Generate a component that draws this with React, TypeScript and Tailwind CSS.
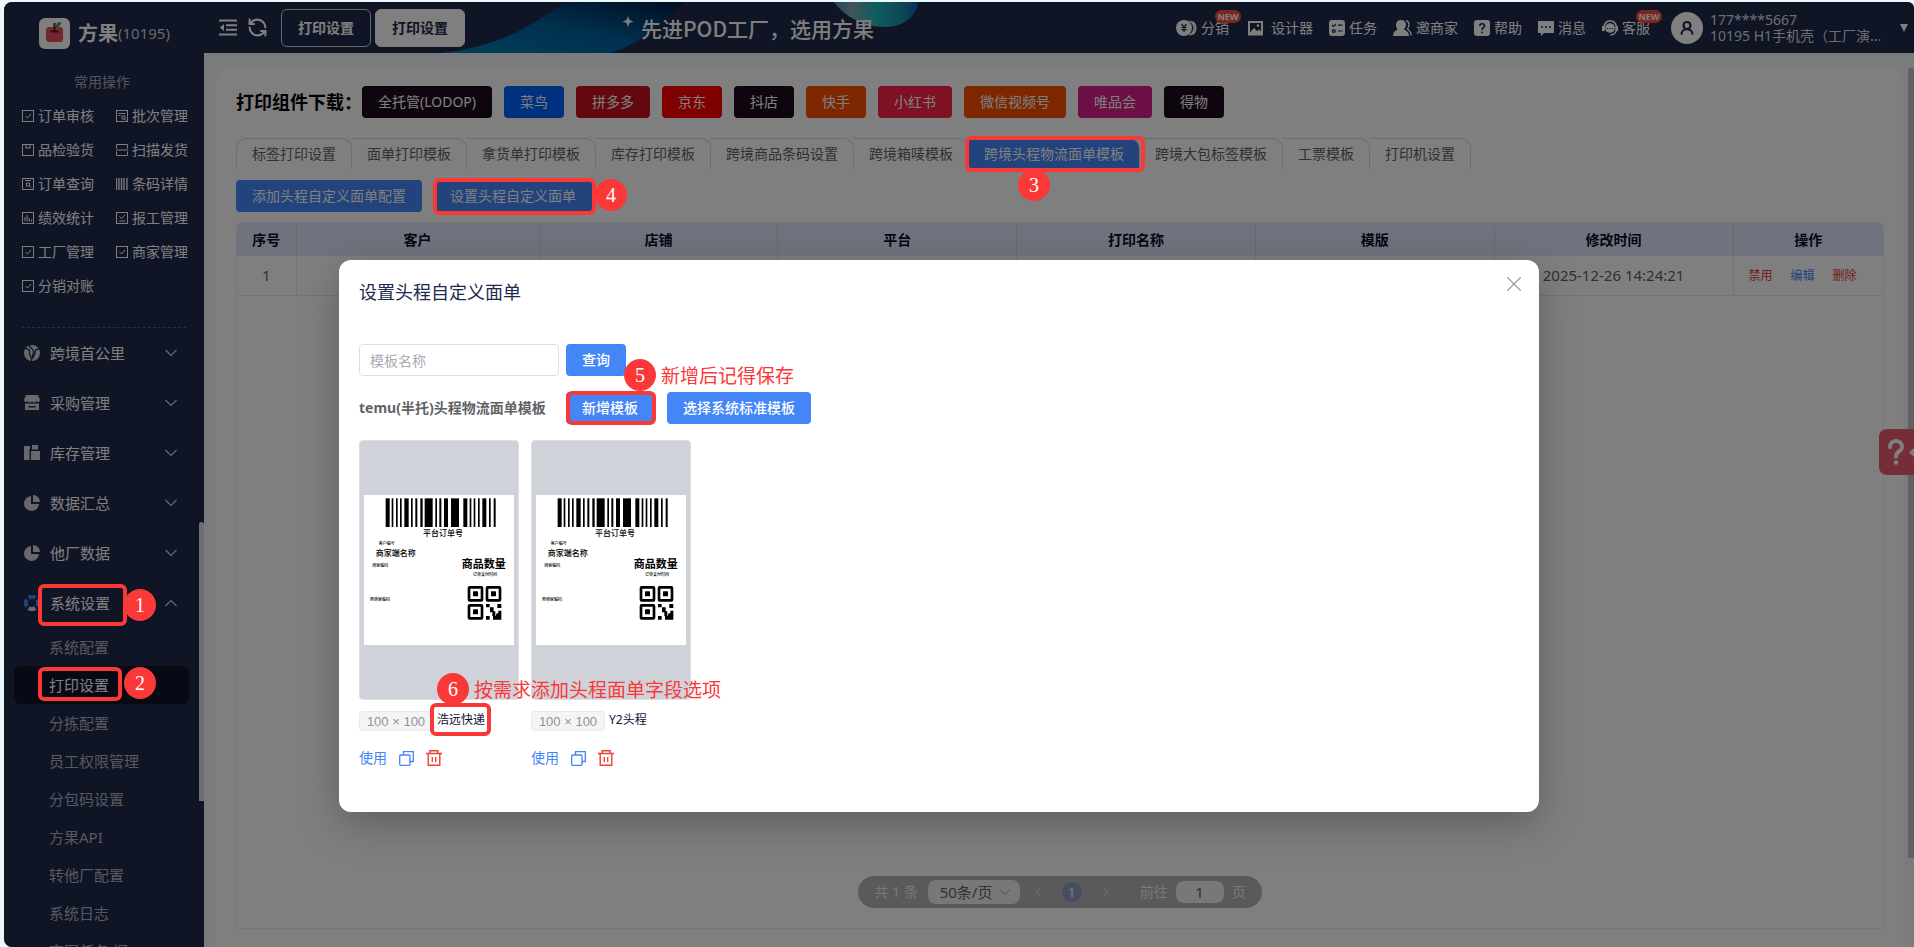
import type { ReactNode } from "react";
import clsx from "clsx";
import { RefreshCcw } from "lucide-react";

const quickLinks = [
    { name: "订单审核", icon: "check" },
    { name: "批次管理", icon: "batch" },
    { name: "品检验货", icon: "package" },
    { name: "扫描发货", icon: "scan" },
    { name: "订单查询", icon: "search" },
    { name: "条码详情", icon: "barcode" },
    { name: "绩效统计", icon: "chart" },
    { name: "报工管理", icon: "report" },
    { name: "工厂管理", icon: "check" },
    { name: "商家管理", icon: "check" },
    { name: "分销对账", icon: "check" },
];

const menus = [
    { name: "跨境首公里", icon: "globe" },
    { name: "采购管理", icon: "shop" },
    { name: "库存管理", icon: "stock" },
    { name: "数据汇总", icon: "pie" },
    { name: "他厂数据", icon: "pie" },
    { name: "系统设置", icon: "ring", open: true },
];

const subMenus = [
    "系统配置",
    "打印设置",
    "分拣配置",
    "员工权限管理",
    "分包码设置",
    "方果API",
    "转他厂配置",
    "系统日志",
    "商图任务(旧)",
];

const downloads = [
    { name: "全托管(LODOP)", color: "bg-[#1f0a1e]" },
    { name: "菜鸟", color: "bg-[#0062fd]" },
    { name: "拼多多", color: "bg-[#c81020]" },
    { name: "京东", color: "bg-[#ff0000]" },
    { name: "抖店", color: "bg-[#1f0a1e]" },
    { name: "快手", color: "bg-[#fb4e00]" },
    { name: "小红书", color: "bg-[#ff2248]" },
    { name: "微信视频号", color: "bg-[#fb4e00]" },
    { name: "唯品会", color: "bg-[#d61e8a]" },
    { name: "得物", color: "bg-[#1f0a1e]" },
];

const tabs = [
    "标签打印设置",
    "面单打印模板",
    "拿货单打印模板",
    "库存打印模板",
    "跨境商品条码设置",
    "跨境箱唛模板",
    "跨境头程物流面单模板",
    "跨境大包标签模板",
    "工票模板",
    "打印机设置",
];

const columns = ["序号", "客户", "店铺", "平台", "打印名称", "模版", "修改时间", "操作"];

const navItems = [
    { name: "分销", icon: "coin", isNew: true },
    { name: "设计器", icon: "picture" },
    { name: "任务", icon: "task" },
    { name: "邀商家", icon: "users" },
    { name: "帮助", icon: "help" },
    { name: "消息", icon: "message" },
    { name: "客服", icon: "service", isNew: true },
];

const bars = [
    [65, 12], [83, 5], [96, 5], [108, 5], [121, 13], [141, 5], [154, 6], [169, 7], [182, 24], [214, 5],
    [226, 6], [240, 12], [261, 24], [298, 12], [317, 5], [329, 5], [342, 5], [355, 12], [375, 5], [389, 6],
];

function QuickIcon({ type }: { type: string }) {
    const glyphs: Record<string, ReactNode> = {
        check: <path d="M3.5 6l2 2 3.5-4" />,
        batch: <path d="M2.5 3.5h7M2.5 5.5h2M6 6h3v3H6zM8.5 9l1.5 1.500" />,
        package: <path d="M4 .5v4l2-1 2 1v-4" />,
        search: <path d="M3 2.500h6M4.500 5h3v3h-3zM7.500 8l1.500 1.500" />,
        chart: <path d="M3 9.500V5M5.200 9.500V3M7.300 9.500V6M9.500 9.500V7.500" />,
        report: <path d="M3.500 4.500l2 2L9 3M3 9h6" />,
    };
    return (
        <svg className="size-3 shrink-0" viewBox="0 0 12 12" fill="none" stroke="currentColor" strokeWidth="1" aria-hidden="true">
            {type === "barcode" && <path d="M.5 0v12M3 0v12M5.500 0v12M8 0v12M11 0v12" strokeWidth="1.300" />}
            {type === "scan" && <path d="M.5 4.500V.5h11v4M.5 7.500v4h11v-4M0 6h12" />}
            {type !== "barcode" && type !== "scan" && (
                <>
                    <rect x=".5" y=".5" width="11" height="11" />
                    {glyphs[type]}
                </>
            )}
        </svg>
    );
}

function MenuIcon({ type }: { type: string }) {
    return (
        <svg className="size-4 shrink-0 text-[#d2d3d8]" viewBox="0 0 16 16" fill="currentColor" aria-hidden="true">
            {type === "globe" && (
                <>
                    <circle cx="8" cy="8" r="8" />
                    <path d="M1 3.500c4 0 5 2 4.500 4.500S8 11 7.500 16M5.500 0c-1 3 3.500 3 4 6s-1.500 4-1 6M15 4c-4 0-4 2-4 4s-2 3-2.500 6" fill="none" stroke="#202a4c" strokeWidth="1.300" />
                </>
            )}
            {type === "shop" && (
                <>
                    <path d="M2 0h12l2 5c0 2-3 3-4 1-1 2-3 2-4 0-1 2-3 2-4 0-1 2-4 1-4-1z" />
                    <path fillRule="evenodd" d="M1 8.500h14V15H1zM4.500 11v1.500h7V11z" />
                </>
            )}
            {type === "stock" && <path d="M0 1h6v3H5.500v11H0zM8 0h6v4.500H8zM7 6h9v9H7z" />}
            {type === "pie" && (
                <>
                    <path d="M7 1v8h8a7.500 7.500 0 1 1-8-8z" />
                    <path d="M9 0a7 7 0 0 1 7 7H9z" />
                </>
            )}
            {type === "ring" && (
                <g fill="none" strokeWidth="4">
                    <path d="M4.600 3A6 6 0 0 1 11.400 3M13 4.600A6 6 0 0 1 13 11.400M3 11.400A6 6 0 0 1 3 4.600" stroke="#4486f7" />
                    <path d="M11.400 13A6 6 0 0 1 4.600 13" stroke="currentColor" />
                </g>
            )}
        </svg>
    );
}

function Chevron({ up }: { up?: boolean }) {
    return (
        <svg className="h-2 w-3" viewBox="0 0 12 8" fill="none" stroke="#d2d3d8" strokeWidth="1.200" aria-hidden="true">
            <path d={up ? "M.5 7L6 1.500 11.500 7" : "M.5 1L6 6.500 11.500 1"} />
        </svg>
    );
}

const navIconSizes: Record<string, { width: string; box: string }> = {
    coin: { width: "w-[21px]", box: "0 0 21 16" },
    picture: { width: "w-[22px]", box: "-3 0 22 16" },
    users: { width: "w-[19px]", box: "0 0 19 16" },
};

function NavIcon({ type }: { type: string }) {
    const size = navIconSizes[type] ?? { width: "w-4", box: "0 0 16 16" };
    return (
        <svg className={clsx("h-4 shrink-0 text-white", size.width)} viewBox={size.box} fill="currentColor" aria-hidden="true">
            {type === "coin" && (
                <>
                    <circle cx="8" cy="8" r="8" />
                    <path d="M5.500 4L8 7l2.500-3M8 7v5M5.500 7.500h5M5.500 9.700h5" fill="none" stroke="#202a4c" strokeWidth="1.200" />
                    <path d="M13.500 .8a8 8 0 0 1 0 14.400M16.500 1.500a8 8 0 0 1 0 13" fill="none" stroke="currentColor" strokeWidth="1.500" />
                </>
            )}
            {type === "picture" && (
                <>
                    <path fillRule="evenodd" d="M0 1h15v14.500H0zM2 3v9.500L6 8l3 3 2-1.500 2 2V3z" />
                    <circle cx="10" cy="5.500" r="1.300" />
                </>
            )}
            {type === "task" && (
                <>
                    <rect width="16" height="16" rx="3" />
                    <path d="M3 5l1.500 1.500L7 4M9 5.200h4.500M9 11h4.500" fill="none" stroke="#202a4c" strokeWidth="1.200" />
                    <circle cx="4.800" cy="11" r="1.400" fill="none" stroke="#202a4c" strokeWidth="1.200" />
                </>
            )}
            {type === "users" && (
                <>
                    <path d="M8 0c3 0 5 2 5 4.500 0 2-1 3.500-2 4.500 0 1 5 2 5 7H0c0-5 4-5.500 4.500-7C3.500 8 3 6.500 3 4.500 3 2 5 0 8 0z" />
                    <path d="M13 .5c2 .5 3 2 3 4s-1 3.500-1.500 4.500c1 1 3.500 2 3.800 6.500" fill="none" stroke="currentColor" strokeWidth="1.300" />
                </>
            )}
            {type === "help" && (
                <>
                    <rect width="16" height="16" rx="3" />
                    <path d="M5.800 6c0-3 4.700-3 4.700 0C10.500 7.500 8 8 8 10M8 11.500v1.700" fill="none" stroke="#202a4c" strokeWidth="1.700" />
                </>
            )}
            {type === "message" && (
                <>
                    <path d="M0 1h16v12H6l-3 3v-3H0z" />
                    <path d="M3 6.200h2v1.600H3zM7 6.200h2v1.600H7zM11 6.200h2v1.600h-2z" fill="#202a4c" />
                </>
            )}
            {type === "service" && (
                <>
                    <path d="M2 9V7a6.200 6.200 0 0 1 12.400 0v2c0 4-3 6-6 6" fill="none" stroke="currentColor" strokeWidth="1.600" />
                    <path d="M0 6h3v5H0zM13.500 6H16v5h-2.500z" />
                    <circle cx="8" cy="8" r="4.800" />
                    <path d="M5 8.500h1.200M7.500 8.500h1.200M10 8.500h1.200" stroke="#202a4c" strokeWidth="1" />
                </>
            )}
        </svg>
    );
}

function Sidebar() {
    return (
        <aside className="relative flex w-[200px] shrink-0 flex-col overflow-hidden bg-[#202a4c] pt-[15px] text-white">
            <div className="flex h-8 shrink-0 items-center pl-[35px]">
                <svg className="size-[31px]" viewBox="0 0 31 31" aria-hidden="true">
                    <rect width="31" height="31" rx="6" fill="#fff" />
                    <rect x="7" y="9" width="17" height="15" rx="3" fill="#e45058" />
                    <path d="M15.500 5v8M11.500 13.500h8" stroke="#3a2230" strokeWidth="2" />
                    <path d="M17 9c0-4 2-5 5-5 0 4-2 5-5 5z" fill="#3f9c48" />
                </svg>
                <span className="ml-2 font-[Noto_Sans_CJK_SC] text-xl leading-8 font-bold">方果</span>
                <span className="text-[15px] text-[#d2d3d8]">(10195)</span>
            </div>
            <div className="mt-4 h-[34px] shrink-0 pr-1 text-center text-sm leading-[34px] text-[#a6a9b4]">常用操作</div>
            <nav className="grid shrink-0 auto-rows-[34px] grid-cols-[94px_1fr] pl-[18px]">
                {quickLinks.map((item) => (
                    <a key={item.name} href="#" className="flex items-center gap-1 text-sm">
                        <QuickIcon type={item.icon} />
                        {item.name}
                    </a>
                ))}
            </nav>
            <div className="mx-[18px] mt-6 border-t border-dashed border-[#58607c]" />
            <nav className="flex flex-col text-[15px]">
                {menus.map((item) => (
                    <a key={item.name} href="#" className="flex h-[50px] shrink-0 items-center pr-[27px] pl-5">
                        <MenuIcon type={item.icon} />
                        <span className="ml-[10px] grow">{item.name}</span>
                        <Chevron up={item.open} />
                    </a>
                ))}
                {subMenus.map((name) => (
                    <a
                        key={name}
                        href="#"
                        className={clsx(
                            "mr-[15px] ml-[10px] h-[38px] shrink-0 rounded-md pl-[35px] leading-[38px]",
                            name === "打印设置" ? "bg-[#0f1428] text-white" : "text-[#b0b3be]",
                        )}
                    >
                        {name}
                    </a>
                ))}
            </nav>
            <div className="absolute top-[520px] right-0 h-[279px] w-[5px] rounded-t bg-[#dcdee4]" />
        </aside>
    );
}

function Banner() {
    return (
        <div className="relative h-full grow">
            <svg className="absolute top-0 -left-6 h-[51px] w-[480px]" viewBox="0 0 480 51" aria-hidden="true">
                <defs>
                    <linearGradient id="wave" x1="0" y1="1" x2="1" y2="0">
                        <stop offset="0" stopColor="#0080b8" />
                        <stop offset="0.500" stopColor="#00609c" />
                        <stop offset="1" stopColor="#001a44" />
                    </linearGradient>
                    <linearGradient id="drop" x1="0" y1="0" x2="1" y2="0">
                        <stop offset="0" stopColor="#3a90bc" />
                        <stop offset="0.200" stopColor="#88a8b4" />
                        <stop offset="0.500" stopColor="#1cb8bc" />
                        <stop offset="0.800" stopColor="#1c90b0" />
                        <stop offset="1" stopColor="#0c58b0" />
                    </linearGradient>
                </defs>
                <path d="M0 51C50 45 80 32 124 0h120c-20 14-36 38-74 51z" fill="url(#wave)" />
                <path d="M393 0c8 12 28 25 50 25 20 0 31-10 35-25z" fill="url(#drop)" />
                <path d="M187 14l1.500 4 4 1.500-4 1.500-1.500 4-1.500-4-4-1.500 4-1.500z" fill="#fff" />
            </svg>
            <h2 className="relative pl-44 font-[Noto_Sans_CJK_SC] text-[21px] leading-[52px] font-medium whitespace-nowrap text-white">先进POD工厂，选用方果</h2>
        </div>
    );
}

function Header() {
    return (
        <header className="flex h-[51px] shrink-0 items-center bg-[#202a4c] pr-[6px] pl-[15px] text-sm text-white">
            <button type="button" aria-label="收起菜单">
                <svg className="block h-[17px] w-[18px]" viewBox="0 0 18 17" fill="none" stroke="#fff" strokeWidth="2" aria-hidden="true">
                    <path d="M0 1.500h18M7 6.200h11M7 10.800h11M0 15.500h18" />
                    <path d="M5 5v7L1 8.500z" fill="#fff" stroke="none" />
                </svg>
            </button>
            <button type="button" aria-label="刷新" className="mr-[13px] ml-[10px]">
                <RefreshCcw className="block size-[21px]" strokeWidth={2.4} aria-hidden="true" />
            </button>
            <button type="button" className="h-[38px] rounded-md border border-[#d0d2da] px-4 font-bold">打印设置</button>
            <button type="button" className="ml-1 h-[38px] rounded-md border border-white bg-white px-4 font-bold text-[#202a4c]">打印设置</button>
            <Banner />
            <nav className="flex items-center gap-4">
                {navItems.map((item) => (
                    <a key={item.name} href="#" className="relative flex items-center gap-1">
                        <NavIcon type={item.icon} />
                        {item.name}
                        {item.isNew && (
                            <span className="absolute -top-2 -right-3 h-[13px] w-[26px] rounded-full bg-[#fa4c3c] text-center text-[9px] leading-[13px] font-bold">NEW</span>
                        )}
                    </a>
                ))}
            </nav>
            <button type="button" className="ml-[21px] flex items-center">
                <svg className="size-8" viewBox="0 0 32 32" aria-hidden="true">
                    <circle cx="16" cy="16" r="16" fill="#fff" />
                    <circle cx="16" cy="13.500" r="3.500" fill="none" stroke="#202a4c" strokeWidth="2.200" />
                    <path d="M10.500 22.500c0-7 11-7 11 0" fill="none" stroke="#202a4c" strokeWidth="2.200" />
                </svg>
                <span className="ml-[7px] w-[174px] text-left text-sm leading-4 whitespace-nowrap text-[#dcdde2]">
                    177****5667
                    <br />
                    10195 H1手机壳（工厂演...
                </span>
                <svg className="ml-4 h-2 w-2" viewBox="0 0 8 8" fill="#fff" aria-hidden="true">
                    <path d="M0 0h8L4 8z" />
                </svg>
            </button>
        </header>
    );
}

function PrintPage() {
    return (
        <main className="relative flex min-h-0 grow flex-col bg-[#f4f7fb] pt-[13px] pr-[11px] pl-3">
            <section className="flex grow flex-col rounded-t-2xl bg-white pt-5 pr-[19px] pl-5">
                <div className="flex items-center gap-3">
                    <h1 className="-mr-3 text-lg font-bold text-black">打印组件下载：</h1>
                    {downloads.map((item) => (
                        <button key={item.name} type="button" className={clsx("h-8 rounded px-4 text-sm text-white", item.color)}>
                            {item.name}
                        </button>
                    ))}
                </div>
                <div role="tablist" className="mt-5 flex h-[31px] text-sm text-[#606266]">
                    {tabs.map((name) => (
                        <button
                            key={name}
                            type="button"
                            role="tab"
                            className={clsx(
                                "rounded-tr-[10px] border-t border-r border-[#d8dbe2] px-[15px] first:rounded-tl-[10px] first:border-l",
                                name === "跨境头程物流面单模板" && "bg-[#4486f7] text-white",
                            )}
                        >
                            {name}
                        </button>
                    ))}
                </div>
                <div className="mt-[11px] flex gap-3 text-sm text-white">
                    <button type="button" className="h-8 rounded bg-[#4486f7] px-4">添加头程自定义面单配置</button>
                    <button type="button" className="h-8 rounded bg-[#4486f7] px-4">设置头程自定义面单</button>
                </div>
                <div className="mt-[10px] mb-[18px] flex grow flex-col items-center overflow-hidden rounded-t-md border border-[#ebeef5]">
                    <table className="w-full table-fixed text-[15px]">
                        <colgroup>
                            <col className="w-[59px]" />
                            <col className="w-[243px]" />
                            <col span={5} />
                            <col className="w-[150px]" />
                        </colgroup>
                        <thead>
                            <tr className="h-[33px] bg-[#e0e7fb]">
                                {columns.map((name) => (
                                    <th key={name} className="border-r border-[#cdd3e4] p-0 text-sm font-bold text-[#0b0b2a] last:border-r-0">{name}</th>
                                ))}
                            </tr>
                        </thead>
                        <tbody>
                            <tr className="h-[39px] border-b border-[#e6e9f0] text-center text-[#606266]">
                                <td className="border-r border-[#e6e9f0]">1</td>
                                <td className="border-r border-[#e6e9f0]" />
                                <td className="border-r border-[#e6e9f0]" />
                                <td className="border-r border-[#e6e9f0]" />
                                <td className="border-r border-[#e6e9f0]" />
                                <td className="border-r border-[#e6e9f0]" />
                                <td className="border-r border-[#e6e9f0]">2025-12-26 14:24:21</td>
                                <td>
                                    <div className="flex gap-[18px] pt-[2px] pl-[15px] text-xs">
                                        <button type="button" className="text-[#e6392f]">禁用</button>
                                        <button type="button" className="text-[#4486f7]">编辑</button>
                                        <button type="button" className="text-[#e6392f]">删除</button>
                                    </div>
                                </td>
                            </tr>
                        </tbody>
                    </table>
                    <Pagination />
                </div>
            </section>
            <div className="absolute top-[15px] right-0 h-[790px] w-[6px] rounded-t-full bg-[#c0c3c8]" />
        </main>
    );
}

function Pagination() {
    return (
        <div className="mt-auto mb-5 flex h-8 items-center rounded-full bg-[#b4b4b4] px-4 text-sm text-[#f0f0f0]">
            <span className="whitespace-nowrap">共 1 条</span>
            <div className="relative ml-[10px]">
                <select aria-label="每页条数" className="h-6 w-[92px] appearance-none rounded-lg bg-[#f0f0f0] pl-3 text-[15px] leading-6 text-[#606266]">
                    <option>50条/页</option>
                </select>
                <svg className="pointer-events-none absolute top-[9px] right-[10px] h-[6px] w-[10px]" viewBox="0 0 10 6" fill="none" stroke="#a0a0a0" aria-hidden="true">
                    <path d="M0 .5l5 5 5-5" />
                </svg>
            </div>
            <button type="button" aria-label="上一页" className="ml-4">
                <svg className="block h-[10px] w-[6px]" viewBox="0 0 6 10" fill="none" stroke="currentColor" aria-hidden="true">
                    <path d="M5.500 0l-5 5 5 5" />
                </svg>
            </button>
            <button type="button" className="ml-5 size-5 rounded-full bg-[#8c9cbe] text-[15px] leading-5">1</button>
            <button type="button" aria-label="下一页" className="ml-5">
                <svg className="block h-[10px] w-[6px]" viewBox="0 0 6 10" fill="none" stroke="currentColor" aria-hidden="true">
                    <path d="M.5 0l5 5-5 5" />
                </svg>
            </button>
            <label className="ml-8 flex items-center gap-2">
                前往
                <input defaultValue="1" className="h-[22px] w-12 rounded-lg bg-[#f0f0f0] text-center text-[15px] text-[#606266]" />
                页
            </label>
        </div>
    );
}

function Finder({ x, y }: { x: number; y: number }) {
    return (
        <>
            <rect x={x + 4} y={y + 4} width="39" height="39" rx="2" fill="none" stroke="#000" strokeWidth="8" />
            <rect x={x + 16} y={y + 16} width="15" height="15" rx="2" />
        </>
    );
}

function LabelPreview() {
    return (
        <svg className="size-[150px] bg-white" viewBox="0 0 450 450" fontFamily="Noto Sans CJK SC, sans-serif" fontWeight="500" aria-hidden="true">
            {bars.map(([x, width]) => (
                <rect key={x} x={x} y="10" width={width} height="86" />
            ))}
            <text x="237" y="124" fontSize="24" textAnchor="middle">平台订单号</text>
            <text x="44" y="149" fontSize="12">客户编号</text>
            <text x="35" y="182" fontSize="24">商家端名称</text>
            <text x="25" y="216" fontSize="12">商家编码</text>
            <text x="293" y="219" fontSize="33" fontWeight="700">商品数量</text>
            <text x="327" y="243" fontSize="12">订单支付时间</text>
            <text x="18" y="319" fontSize="12">原商家编码</text>
            <Finder x={311} y={273} />
            <Finder x={365} y={273} />
            <Finder x={311} y={327} />
            <path d="M366 327h11v10h-11zM400 327h12v12h-12zM378 337h11v12h5v14h-9v-11h-7zM366 363h11v11h-11zM403 347h9v27h-25v-11h8l3-8h5z" />
        </svg>
    );
}

function TemplateCard({ name }: { name: string }) {
    return (
        <div className="w-40">
            <div className="flex h-[260px] items-center justify-center rounded border border-[#dcdfe6] bg-[#cfd3d9]">
                <LabelPreview />
            </div>
            <div className="mt-[9px] flex items-center gap-1">
                <span className="mt-[2px] h-5 w-[74px] rounded-sm border border-[#e9e9eb] bg-[#f4f4f5] text-center font-[Liberation_Sans] text-[13px] leading-[19px] whitespace-nowrap text-[#909399]">100 × 100</span>
                <span className="text-xs text-[#10103a]">{name}</span>
            </div>
            <div className="mt-[17px] flex items-center gap-3">
                <button type="button" className="text-sm text-[#4486f7]">使用</button>
                <button type="button" aria-label="复制">
                    <svg className="block size-[15px]" viewBox="0 0 15 15" fill="none" stroke="#4486f7" strokeWidth="1.300" aria-hidden="true">
                        <rect x=".7" y="4" width="10.300" height="10.300" rx="1" />
                        <path d="M4.500 4V.7h9.800v9.800H11" />
                    </svg>
                </button>
                <button type="button" aria-label="删除">
                    <svg className="block size-4" viewBox="0 0 16 16" fill="none" stroke="#e8432f" strokeWidth="1.400" aria-hidden="true">
                        <path d="M0 3.500h16M4 3.500V.7h8v2.800M2.200 3.500v11.800h11.600V3.500M6.300 7v5M9.700 7v5" />
                    </svg>
                </button>
            </div>
        </div>
    );
}

function TemplateDialog() {
    return (
        <div className="absolute inset-0 flex justify-center bg-black/50 pt-[258px] pr-10">
            <div role="dialog" aria-labelledby="dialog-title" className="relative h-[552px] w-[1200px] rounded-xl bg-white px-5 pt-5 shadow-[0_12px_40px_rgba(0,0,0,0.25)]">
                <h2 id="dialog-title" className="text-lg leading-[25px] text-[#202a4c]">设置头程自定义面单</h2>
                <button type="button" aria-label="关闭" className="absolute top-[17px] right-[18px]">
                    <svg className="block size-[14px]" viewBox="0 0 14 14" fill="none" stroke="#909399" strokeWidth="1.200" aria-hidden="true">
                        <path d="M0 0l14 14M14 0L0 14" />
                    </svg>
                </button>
                <div className="mt-[39px] flex gap-[7px] text-sm">
                    <input aria-label="模板名称" placeholder="模板名称" className="h-8 w-[200px] rounded border border-[#dcdfe6] px-[10px] placeholder:text-[#a8abb2]" />
                    <button type="button" className="h-8 rounded bg-[#4486f7] px-4 font-medium text-white">查询</button>
                </div>
                <div className="mt-4 flex items-center text-sm">
                    <h3 className="w-[207px] font-bold text-[#606266]">temu(半托)头程物流面单模板</h3>
                    <button type="button" className="h-8 rounded bg-[#4486f7] px-4 font-medium text-white">新增模板</button>
                    <button type="button" className="ml-[13px] h-8 rounded bg-[#4486f7] px-4 font-medium text-white">选择系统标准模板</button>
                </div>
                <div className="mt-4 flex gap-3">
                    <TemplateCard name="浩远快递" />
                    <TemplateCard name="Y2头程" />
                </div>
            </div>
        </div>
    );
}

// numbered walkthrough marks, drawn over the whole page
const steps = [
    { box: "top-[584px] left-[38px] h-[42px] w-[89px]", dot: "top-[589px] left-[124px]" },
    { box: "top-[667px] left-[38px] h-[34px] w-[84px]", dot: "top-[667px] left-[124px]" },
    { box: "top-[136px] left-[965px] h-[36px] w-[180px]", dot: "top-[169px] left-[1018px]" },
    { box: "top-[178px] left-[433px] h-[37px] w-[163px]", dot: "top-[179px] left-[595px]" },
    { box: "top-[391px] left-[566px] h-[34px] w-[90px]", dot: "top-[359px] left-[624px]", note: "新增后记得保存" },
    { box: "top-[703px] left-[430px] h-[33px] w-[61px]", dot: "top-[673px] left-[437px]", note: "按需求添加头程面单字段选项" },
];

function Steps() {
    return (
        <div className="pointer-events-none absolute inset-0 overflow-hidden">
            {steps.map((step, i) => (
                <div key={step.box}>
                    <div className={clsx("absolute rounded-md border-4 border-[#fb3838]", step.box)} />
                    <div className={clsx("absolute flex items-center gap-[5px]", step.dot)}>
                        <span className="size-8 rounded-full bg-[#fb3838] text-center font-[Liberation_Serif] text-xl leading-8 text-white">{i + 1}</span>
                        {step.note && <span className="pt-[2px] text-[19px] whitespace-nowrap text-[#fb3838]">{step.note}</span>}
                    </div>
                </div>
            ))}
        </div>
    );
}

export default function App() {
    return (
        <div className="relative h-screen overflow-hidden bg-[#eaf7fb] pt-[2px] pl-1 font-['Noto_Sans','Noto_Sans_CJK_SC',sans-serif]">
            <div className="relative flex h-full overflow-hidden rounded-l-lg rounded-tr-md">
                <Sidebar />
                <div className="flex min-w-0 grow flex-col">
                    <Header />
                    <PrintPage />
                </div>
                <button type="button" aria-label="帮助中心" className="absolute top-[427px] right-0 flex h-[46px] w-[35px] items-center rounded-l-lg bg-[#ea5a70] pl-2">
                    <svg className="h-[26px] w-[27px]" viewBox="0 0 27 26" fill="none" aria-hidden="true">
                        <path d="M3 8c0-8 12-8 12 0 0 4.500-6 4-6 9.500" stroke="#fff" strokeWidth="4" strokeLinecap="round" />
                        <circle cx="9" cy="23.500" r="2.200" fill="#fff" />
                        <path d="M27 9v9l-5-4.500z" fill="#fff" />
                    </svg>
                </button>
                <TemplateDialog />
            </div>
            <Steps />
        </div>
    );
}
